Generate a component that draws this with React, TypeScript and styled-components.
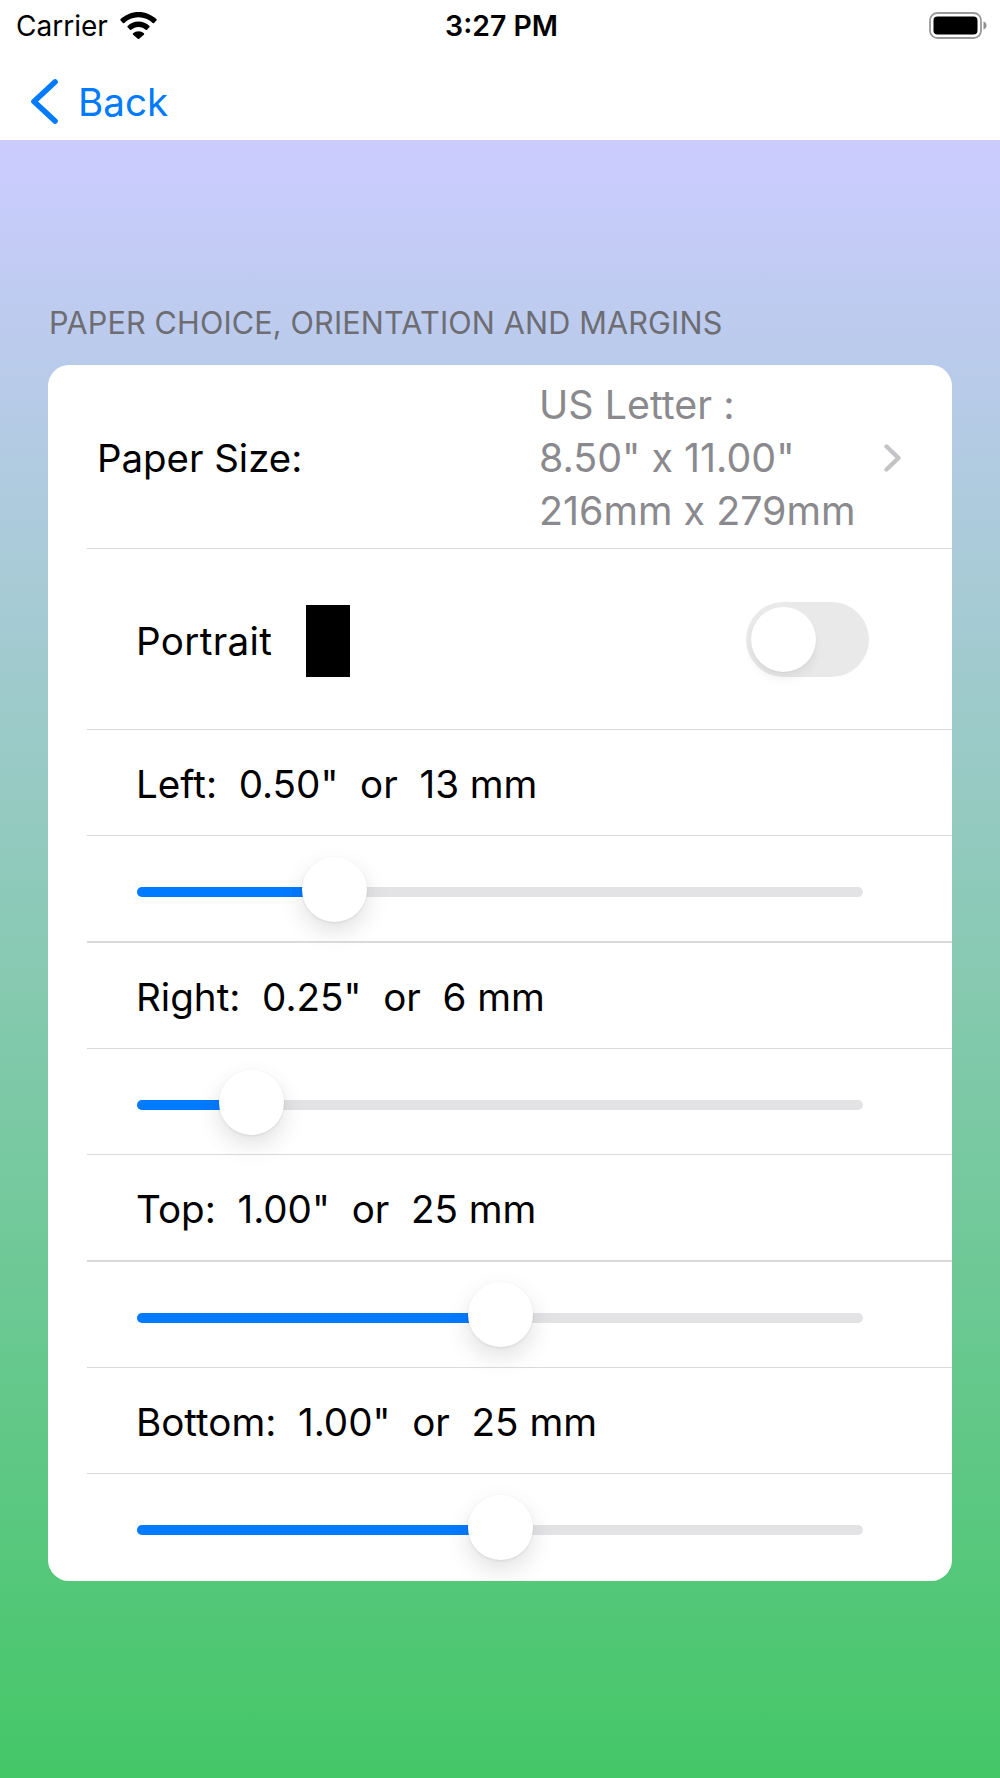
import { FC } from 'react';
import styled, { createGlobalStyle } from 'styled-components';

const GlobalStyle = createGlobalStyle`
  html, body {
    margin: 0;
    padding: 0;
    background: #fff;
  }
  body {
    font-family: Inter, "Liberation Sans", sans-serif;
    -webkit-font-smoothing: antialiased;
  }
`;

const Screen = styled.div`
  width: 1000px;
  height: 1778px;
  display: flex;
  flex-direction: column;
  overflow: hidden;
`;

const StatusBar = styled.div`
  height: 53px;
  display: grid;
  grid-template-columns: 1fr auto 1fr;
  align-items: center;
  box-sizing: border-box;
  padding: 0 13px 2px 16px;
  color: #000;
`;

const StatusLeft = styled.div`
  display: flex;
  align-items: center;
  gap: 12px;
`;

const Carrier = styled.span`
  font-size: 28px;
`;

const Clock = styled.span`
  font-size: 28.4px;
  font-weight: 600;
`;

const StatusRight = styled.div`
  display: flex;
  justify-content: flex-end;
`;

const NavBar = styled.div`
  height: 87px;
  display: flex;
  align-items: center;
  gap: 20px;
  padding: 10px 0 0 31px;
  box-sizing: border-box;
  color: #007aff;
`;

const BackLabel = styled.span`
  font-size: 38.6px;
`;

const Content = styled.div`
  flex: 1;
  padding: 165px 48px 0;
  background: linear-gradient(180deg, #ccccff 0%, #44c767 100%);
`;

const SectionTitle = styled.div`
  height: 60px;
  padding-left: 1px;
  font-size: 30.6px;
  line-height: 36px;
  letter-spacing: 0.15px;
  color: #6d6d72;
`;

const Card = styled.div`
  background: #fff;
  border-radius: 21px;
  overflow: hidden;
`;

// separator starts at the content inset and runs to the card edge
const Row = styled.div<{ $height: number; $inset?: boolean }>`
  position: relative;
  height: ${p => p.$height}px;
  display: flex;
  align-items: center;
  box-sizing: border-box;
  padding: 2px ${p => (p.$inset ? 89 : 51)}px 0 ${p => (p.$inset ? 89 : 50)}px;

  &::after {
    content: '';
    position: absolute;
    left: 39px;
    right: 0;
    bottom: 0;
    height: 1.3px;
    background: #d9d9db;
  }

  &:last-child::after {
    display: none;
  }
`;

const PaperLabel = styled.span`
  flex: 1;
  margin-left: -1px;
  font-size: 38.4px;
  color: #000;
`;

const PaperDetail = styled.div`
  width: 345px;
  font-size: 39.4px;
  line-height: 53px;
  color: #8a8a8e;
`;

const Chevron = styled.svg`
  display: block;
  flex: none;
`;

const OptionLabel = styled.span`
  margin-left: -1px;
  font-size: 38.6px;
  color: #000;
  white-space: pre;
`;

const PortraitLabel = styled(OptionLabel)`
  letter-spacing: 0.35px;
`;

const PageShape = styled.div`
  width: 44px;
  height: 72px;
  margin-left: 34px;
  background: #000;
`;

const Toggle = styled.div`
  position: relative;
  width: 123px;
  height: 75px;
  margin: -2px -6px 0 auto;
  border-radius: 38px;
  background: #e9e9ea;
`;

const ToggleKnob = styled.div`
  position: absolute;
  top: 5px;
  left: 5px;
  width: 65px;
  height: 65px;
  border-radius: 50%;
  background: #fff;
  box-shadow: 0 8px 10px rgba(0, 0, 0, 0.05), 0 1px 2px rgba(0, 0, 0, 0.05);
`;

const Track = styled.div`
  position: relative;
  width: 100%;
  height: 10px;
  margin-top: 4px;
  border-radius: 5px;
  background: #e3e3e5;
`;

const TrackFill = styled.div`
  height: 100%;
  border-radius: 5px 0 0 5px;
  background: #007aff;
`;

const Thumb = styled.div`
  position: absolute;
  top: -30.5px;
  width: 65px;
  height: 65px;
  margin-left: -32.5px;
  border-radius: 50%;
  background: #fff;
  box-shadow: 0 10px 24px rgba(0, 0, 0, 0.12), 0 1px 3px rgba(0, 0, 0, 0.08);
`;

// inches run 0..2, the thumb centre travels inside the track by its own radius
const THUMB_INSET = 32;
const TRACK_WIDTH = 726;

const margins = [
  { id: 'left', label: 'Left:  0.50"  or  13 mm', inches: 0.5 },
  { id: 'right', label: 'Right:  0.25"  or  6 mm', inches: 0.25 },
  { id: 'top', label: 'Top:  1.00"  or  25 mm', inches: 1 },
  { id: 'bottom', label: 'Bottom:  1.00"  or  25 mm', inches: 1 },
];

const WifiIcon: FC = () => (
  <svg width="37" height="27" viewBox="0 0 37 27" fill="#000">
    <path d="M18.5 0C11.6 0 5.4 2.7 0.6 7.1c-.4.4-.4 1 0 1.4l2.3 2.4c.4.4 1 .4 1.4 0C8 7.4 13 5.2 18.5 5.2S29 7.4 32.7 10.9c.4.4 1 .4 1.4 0l2.3-2.4c.4-.4.4-1 0-1.4C31.6 2.7 25.4 0 18.5 0z" />
    <path d="M18.5 9.6c-4.2 0-8 1.6-10.9 4.3-.4.4-.4 1 0 1.4l2.4 2.4c.4.4 1 .4 1.3 0 1.9-1.7 4.4-2.8 7.2-2.8s5.3 1.1 7.2 2.8c.4.4 1 .4 1.3 0l2.4-2.4c.4-.4.4-1 0-1.4-2.9-2.7-6.7-4.3-10.9-4.3z" />
    <path d="M18.5 19.2c-2.1 0-4 .8-5.4 2.1-.4.4-.4 1 0 1.4l4.7 4c.4.4 1 .4 1.4 0l4.7-4c.4-.4.4-1 0-1.4-1.4-1.3-3.3-2.1-5.4-2.1z" />
  </svg>
);

const BatteryIcon: FC = () => (
  <svg width="58" height="27" viewBox="0 0 58 27">
    <rect x="1" y="1" width="51" height="25" rx="7.5" fill="none" stroke="#9a9a9a" strokeWidth="1.8" />
    <rect x="4.5" y="4.5" width="44" height="18" rx="4" fill="#000" />
    <path d="M54.5 9.5c1.8.6 3 2.2 3 4s-1.2 3.4-3 4z" fill="#8e8e8e" />
  </svg>
);

const App: FC = () => (
  <Screen>
    <GlobalStyle />
    <StatusBar>
      <StatusLeft>
        <Carrier>Carrier</Carrier>
        <WifiIcon />
      </StatusLeft>
      <Clock>3:27 PM</Clock>
      <StatusRight>
        <BatteryIcon />
      </StatusRight>
    </StatusBar>
    <NavBar>
      <svg width="27" height="45" viewBox="0 0 27 45" fill="none" stroke="#007aff" strokeWidth="5.6" strokeLinecap="round" strokeLinejoin="round">
        <path d="M24 3 3 22.5 24 42" />
      </svg>
      <BackLabel>Back</BackLabel>
    </NavBar>
    <Content>
      <SectionTitle>PAPER CHOICE, ORIENTATION AND MARGINS</SectionTitle>
      <Card>
        <Row $height={184}>
          <PaperLabel>Paper Size:</PaperLabel>
          <PaperDetail>
            US Letter :<br />
            8.50" x 11.00"<br />
            216mm x 279mm
          </PaperDetail>
          <Chevron width="17" height="28" viewBox="0 0 17 28" fill="none" stroke="#c4c4c7" strokeWidth="4.4" strokeLinecap="round" strokeLinejoin="round">
            <path d="M2.5 2.5 14.5 14 2.5 25.5" />
          </Chevron>
        </Row>
        <Row $height={181} $inset>
          <PortraitLabel>Portrait</PortraitLabel>
          <PageShape />
          <Toggle>
            <ToggleKnob />
          </Toggle>
        </Row>
        {margins.map(margin => {
          const travel = TRACK_WIDTH - THUMB_INSET * 2;
          const thumbX = THUMB_INSET + (margin.inches / 2) * travel;
          return [
            <Row key={margin.id} $height={106.33} $inset>
              <OptionLabel>{margin.label}</OptionLabel>
            </Row>,
            <Row key={`${margin.id}-slider`} $height={106.33} $inset>
              <Track>
                <TrackFill style={{ width: thumbX }} />
                <Thumb style={{ left: thumbX }} />
              </Track>
            </Row>,
          ];
        })}
      </Card>
    </Content>
  </Screen>
);

export default App;
